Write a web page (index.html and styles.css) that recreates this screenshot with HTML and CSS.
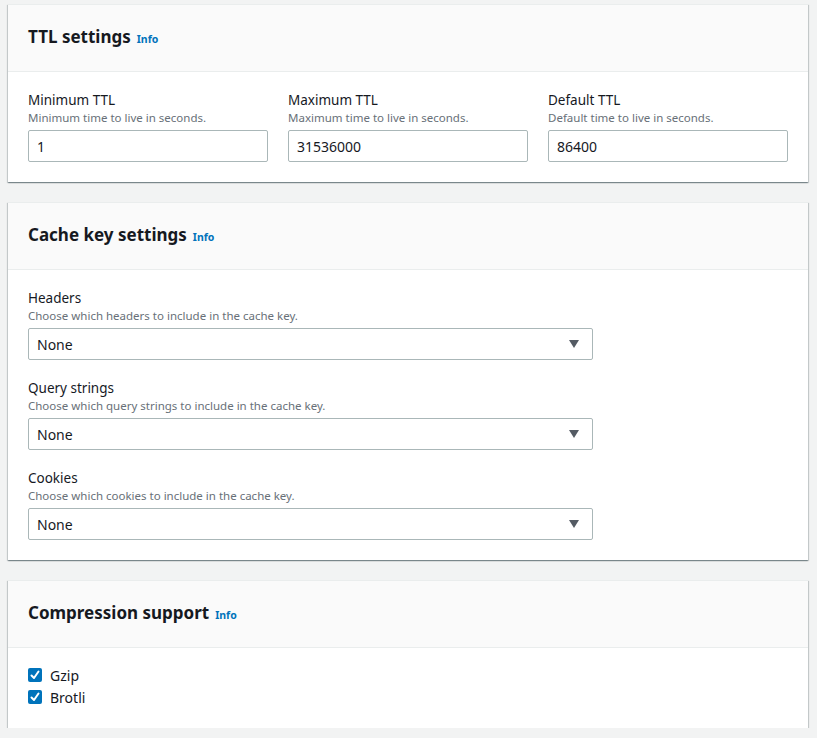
FILE: index.html
```html
<!DOCTYPE html>
<html lang="en">
<head>
<meta charset="utf-8">
<title>Cache policy settings</title>
<link rel="stylesheet" href="styles.css">
</head>
<body>
<div class="page">
  <section class="panel">
    <header class="panel-header">
      <h2 class="panel-title">TTL settings</h2><a class="info" href="#">Info</a>
    </header>
    <div class="panel-body">
      <div class="ttl-grid">
        <div class="field">
          <div class="label">Minimum TTL</div>
          <div class="desc">Minimum time to live in seconds.</div>
          <input class="input" type="text" value="1">
        </div>
        <div class="field">
          <div class="label">Maximum TTL</div>
          <div class="desc">Maximum time to live in seconds.</div>
          <input class="input" type="text" value="31536000">
        </div>
        <div class="field">
          <div class="label">Default TTL</div>
          <div class="desc">Default time to live in seconds.</div>
          <input class="input" type="text" value="86400">
        </div>
      </div>
    </div>
  </section>

  <section class="panel">
    <header class="panel-header">
      <h2 class="panel-title">Cache key settings</h2><a class="info" href="#">Info</a>
    </header>
    <div class="panel-body stack">
      <div class="field">
        <div class="label">Headers</div>
        <div class="desc">Choose which headers to include in the cache key.</div>
        <div class="select"><span>None</span><span class="caret"></span></div>
      </div>
      <div class="field">
        <div class="label">Query strings</div>
        <div class="desc">Choose which query strings to include in the cache key.</div>
        <div class="select"><span>None</span><span class="caret"></span></div>
      </div>
      <div class="field">
        <div class="label">Cookies</div>
        <div class="desc">Choose which cookies to include in the cache key.</div>
        <div class="select"><span>None</span><span class="caret"></span></div>
      </div>
    </div>
  </section>

  <section class="panel">
    <header class="panel-header">
      <h2 class="panel-title">Compression support</h2><a class="info" href="#">Info</a>
    </header>
    <div class="panel-body checks">
      <label class="check"><span class="box"><svg viewBox="0 0 14 14" width="14" height="14"><polyline points="3.5,7.5 6,10 10.5,3.5" fill="none" stroke="#fff" stroke-width="2" stroke-linecap="round" stroke-linejoin="round"/></svg></span>Gzip</label>
      <label class="check"><span class="box"><svg viewBox="0 0 14 14" width="14" height="14"><polyline points="3.5,7.5 6,10 10.5,3.5" fill="none" stroke="#fff" stroke-width="2" stroke-linecap="round" stroke-linejoin="round"/></svg></span>Brotli</label>
    </div>
  </section>
</div>
</body>
</html>
```

FILE: styles.css
```css
* { box-sizing: border-box; }

html, body {
  margin: 0;
  background: #f2f3f3;
}

body {
  padding: 4px 9px 0 8px;
  font-family: "Noto Sans", "Open Sans", sans-serif;
  color: #16191f;
}

.page {
  display: flex;
  flex-direction: column;
  gap: 20px;
}

.panel {
  background: #fff;
  border-top: 1px solid #eaeded;
  box-shadow: 0 1px 1px 0 rgba(0, 28, 36, 0.3),
              1px 1px 1px 0 rgba(0, 28, 36, 0.15),
              -1px 1px 1px 0 rgba(0, 28, 36, 0.15);
}

.panel-header {
  background: #fafafa;
  border-bottom: 1px solid #eaeded;
  padding: 19px 20px 20px;
  height: 67px;
  display: flex;
  align-items: baseline;
  gap: 6px;
}

.panel-title {
  margin: 0;
  font-size: 17px;
  line-height: 26px;
  font-weight: 700;
  color: #16191f;
}

.info {
  font-size: 10.5px;
  font-weight: 700;
  color: #0073bb;
  text-decoration: none;
}

.panel-body {
  padding: 20px;
}

.ttl-grid {
  display: grid;
  grid-template-columns: 240px 240px 240px;
  column-gap: 20px;
}

.stack {
  display: flex;
  flex-direction: column;
  gap: 20px;
}

.stack .field {
  width: 565px;
}

.label {
  font-size: 13.5px;
  line-height: 16px;
  color: #16191f;
}

.desc {
  font-size: 11.5px;
  line-height: 16px;
  color: #687078;
  margin-top: 2px;
  margin-bottom: 4px;
}

.input, .select {
  display: flex;
  align-items: center;
  width: 100%;
  height: 32px;
  border: 1px solid #aab7b8;
  border-radius: 2px;
  padding: 0 8px;
  font-family: "Noto Sans", "Open Sans", sans-serif;
  font-size: 14px;
  color: #16191f;
  background: #fff;
  outline: none;
}

.select {
  justify-content: space-between;
  padding-right: 13px;
}

.caret {
  width: 0;
  height: 0;
  border-left: 5.5px solid transparent;
  border-right: 5.5px solid transparent;
  border-top: 8px solid #545b64;
}

.checks {
  padding: 16px 20px 20px;
  display: flex;
  flex-direction: column;
}

.check {
  display: flex;
  align-items: center;
  gap: 8px;
  height: 22px;
  font-size: 14px;
  color: #16191f;
}

.box {
  width: 14px;
  height: 14px;
  border-radius: 2px;
  background: #0073bb;
  display: flex;
}
```
